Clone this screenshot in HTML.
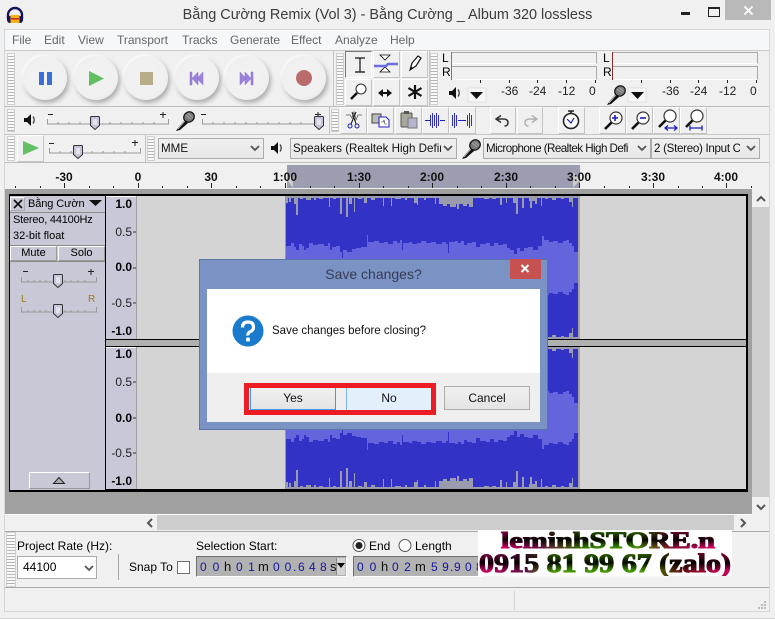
<!DOCTYPE html>
<html><head><meta charset="utf-8"><title>Audacity</title>
<style>
html,body{margin:0;padding:0}
body{width:775px;height:619px;overflow:hidden;position:relative;background:#f0f0f0;font-family:"Liberation Sans","Noto Sans CJK SC",sans-serif;font-size:12px;color:#000}
.a,.t{position:absolute}
.t{white-space:nowrap;line-height:14px}
.m{color:#666;font-size:12px;top:33px}
.grip{position:absolute;width:8px;background:repeating-linear-gradient(#fafafa 0,#fafafa 2px,#b4b4b4 2px,#b4b4b4 3px);border:1px solid #cfcfcf;box-sizing:border-box}
.tb{position:absolute;top:56px;width:44px;height:44px;border-radius:50%;background:radial-gradient(circle at 45% 45%,#f2f2f2 0,#f0f0f0 62%,#e4e4e4 100%);box-shadow:2px 3px 5px #acacac,-1px -1px 2px #fff}
.cell{position:absolute;background:#f0f0f0;border:1px solid;border-color:#fff #c4c4c4 #c4c4c4 #fff;box-sizing:border-box}
.combo{position:absolute;top:138px;height:21px;border:1px solid #acacac;background:linear-gradient(#f0f0f0,#e8e8e8);box-sizing:border-box;font-size:11.6px;line-height:19px;padding-left:2px;white-space:nowrap;overflow:hidden;color:#111}
.combo span{display:block;overflow:hidden}
.rb{font-size:12px;font-weight:bold;color:#111;top:170px;transform:translateX(-50%);z-index:2}
.vr{font-size:12px;color:#222;text-align:right;width:26px;left:106px}
.vb{font-weight:bold;color:#000}
.num{color:#16169e;letter-spacing:5.4px;font-size:12px;top:560px}
.numk{color:#111;font-size:13px;top:560px}
.dbtn{position:absolute;top:388px;height:22px;box-sizing:border-box;text-align:center;font-size:12px;line-height:20px;color:#111}
</style></head>
<body>
<!-- client frame -->
<div class="a" style="left:4px;top:29px;width:766px;height:583px;border:1px solid #d6d6d6;box-sizing:border-box;background:#f0f0f0"></div>
<div class="a" style="left:0;top:618px;width:775px;height:1px;background:#d4d4d4"></div>

<!-- title bar -->
<div class="t" style="left:0;width:775px;text-align:center;top:6px;font-size:14.45px;line-height:18px;color:#3c3c3c">Bằng Cường Remix (Vol 3) - Bằng Cường _ Album 320 lossless</div>
<svg class="a" style="left:5px;top:6px" width="20" height="18" viewBox="0 0 20 18"><path d="M3 13V9a7 7 0 0 1 14 0v4" fill="none" stroke="#14145a" stroke-width="2.4"/><rect x="2" y="10" width="16" height="7" rx="3" fill="#14145a"/><rect x="5.500" y="9" width="9" height="8" fill="#f6b21a"/><rect x="6" y="12" width="8" height="1.600" fill="#d8281c"/></svg>
<div class="a" style="left:681px;top:12px;width:9px;height:3px;background:#222"></div>
<div class="a" style="left:708px;top:7px;width:10px;height:7px;border:1px solid #222;border-top-width:2px"></div>
<div class="a" style="left:725px;top:0;width:46px;height:20px;background:#b9b9b9"></div>
<svg class="a" style="left:743px;top:5px" width="11" height="11"><path d="M1.500 1.500l8 8M9.500 1.500l-8 8" stroke="#fff" stroke-width="1.800"/></svg>

<!-- menu -->
<div class="a" style="left:5px;top:30px;width:764px;height:20px;background:#f6f7f8"></div>
<span class="t m" style="left:12px">File</span><span class="t m" style="left:44px">Edit</span><span class="t m" style="left:78px">View</span><span class="t m" style="left:117px">Transport</span><span class="t m" style="left:182px">Tracks</span><span class="t m" style="left:230px">Generate</span><span class="t m" style="left:291px">Effect</span><span class="t m" style="left:335px">Analyze</span><span class="t m" style="left:390px">Help</span>

<!-- toolbar separators -->
<div class="a" style="left:5px;top:50px;width:764px;height:1px;background:#c8c8c8"></div>
<div class="a" style="left:5px;top:106px;width:764px;height:1px;background:#bdbdbd"></div>
<div class="a" style="left:5px;top:134px;width:764px;height:1px;background:#c8c8c8"></div>
<div class="a" style="left:5px;top:162px;width:764px;height:1px;background:#bdbdbd"></div>
<div class="a" style="left:333px;top:51px;width:1px;height:55px;background:#c4c4c4"></div>
<div class="a" style="left:429px;top:51px;width:1px;height:55px;background:#c4c4c4"></div>
<div class="a" style="left:329px;top:107px;width:1px;height:27px;background:#c4c4c4"></div>
<div class="a" style="left:145px;top:135px;width:1px;height:27px;background:#c4c4c4"></div>

<div class="grip" style="left:7px;top:53px;height:52px"></div>
<div class="grip" style="left:336px;top:53px;height:52px"></div>
<div class="grip" style="left:430px;top:53px;height:52px"></div>
<div class="grip" style="left:7px;top:109px;height:23px"></div>
<div class="grip" style="left:331px;top:109px;height:23px"></div>
<div class="grip" style="left:7px;top:136px;height:25px"></div>
<div class="grip" style="left:147px;top:136px;height:25px"></div>

<!-- transport -->
<div class="tb" style="left:23px"></div><div class="tb" style="left:74px"></div><div class="tb" style="left:124px"></div><div class="tb" style="left:175px"></div><div class="tb" style="left:225px"></div><div class="tb" style="left:282px"></div>

<!-- tool cells -->
<div class="cell" style="left:345px;top:51px;width:27px;height:27px;border-color:#777 #fff #fff #777"></div>
<div class="cell" style="left:373px;top:51px;width:27px;height:27px"></div>
<div class="cell" style="left:401px;top:51px;width:27px;height:27px"></div>
<div class="cell" style="left:345px;top:79px;width:27px;height:27px"></div>
<div class="cell" style="left:373px;top:79px;width:27px;height:27px"></div>
<div class="cell" style="left:401px;top:79px;width:27px;height:27px"></div>

<!-- edit cells -->
<div class="cell" style="left:340px;top:107px;width:27px;height:27px"></div>
<div class="cell" style="left:367px;top:107px;width:27px;height:27px"></div>
<div class="cell" style="left:395px;top:107px;width:27px;height:27px"></div>
<div class="cell" style="left:422px;top:107px;width:27px;height:27px"></div>
<div class="cell" style="left:449px;top:107px;width:27px;height:27px"></div>
<div class="cell" style="left:490px;top:107px;width:26px;height:27px"></div>
<div class="cell" style="left:517px;top:107px;width:26px;height:27px"></div>
<div class="cell" style="left:558px;top:107px;width:27px;height:27px"></div>
<div class="cell" style="left:599px;top:107px;width:27px;height:27px"></div>
<div class="cell" style="left:626px;top:107px;width:27px;height:27px"></div>
<div class="cell" style="left:653px;top:107px;width:27px;height:27px"></div>
<div class="cell" style="left:680px;top:107px;width:27px;height:27px"></div>
<div class="cell" style="left:17px;top:135px;width:27px;height:27px"></div>

<!-- meters -->
<div class="a" style="left:451px;top:52px;width:146px;height:12px;background:#f0f0f0;border-bottom:1px solid #fff;border-top:1px solid #a8a8a8;border-right:1px solid #aaa;box-sizing:border-box"></div>
<div class="a" style="left:451px;top:66px;width:146px;height:14px;background:#f0f0f0;border-bottom:1px solid #fff;border-top:1px solid #a8a8a8;border-right:1px solid #aaa;box-sizing:border-box"></div>
<div class="a" style="left:612px;top:52px;width:146px;height:12px;background:#f0f0f0;border-bottom:1px solid #fff;border-top:1px solid #a8a8a8;border-right:1px solid #aaa;box-sizing:border-box"></div>
<div class="a" style="left:612px;top:66px;width:146px;height:14px;background:#f0f0f0;border-bottom:1px solid #fff;border-top:1px solid #a8a8a8;border-right:1px solid #aaa;box-sizing:border-box"></div>
<div class="a" style="left:451px;top:52px;width:1px;height:28px;background:#35a835"></div>
<div class="a" style="left:612px;top:52px;width:1px;height:28px;background:#8c2a2a"></div>
<span class="t" style="left:442px;top:51px">L</span><span class="t" style="left:442px;top:65px">R</span>
<span class="t" style="left:603px;top:51px">L</span><span class="t" style="left:603px;top:65px">R</span>
<span class="t" style="left:501px;top:84px;color:#222">-36</span><span class="t" style="left:529px;top:84px;color:#222">-24</span><span class="t" style="left:558px;top:84px;color:#222">-12</span><span class="t" style="left:589px;top:84px;color:#222">0</span>
<span class="t" style="left:662px;top:84px;color:#222">-36</span><span class="t" style="left:690px;top:84px;color:#222">-24</span><span class="t" style="left:719px;top:84px;color:#222">-12</span><span class="t" style="left:750px;top:84px;color:#222">0</span>

<!-- combos -->
<div class="combo" style="left:158px;width:106px"><span style="width:90px">MME</span></div>
<div class="combo" style="left:290px;width:167px"><span style="width:148px">Speakers (Realtek High Definit</span></div>
<div class="combo" style="left:483px;width:168px"><span style="width:146px;letter-spacing:-.55px">Microphone (Realtek High Defi</span></div>
<div class="combo" style="left:651px;width:109px"><span style="width:86px;letter-spacing:-.3px">2 (Stereo) Input C</span></div>

<!-- ruler -->
<div class="a" style="left:5px;top:163px;width:764px;height:26px;background:#f0f0f0"></div>
<div class="a" style="left:287px;top:165px;width:293px;height:23px;background:#9d9db2"></div>
<span class="t rb" style="left:64px">-30</span><span class="t rb" style="left:138px">0</span><span class="t rb" style="left:211px">30</span><span class="t rb" style="left:285px">1:00</span><span class="t rb" style="left:359px">1:30</span><span class="t rb" style="left:432px">2:00</span><span class="t rb" style="left:506px">2:30</span><span class="t rb" style="left:579px">3:00</span><span class="t rb" style="left:653px">3:30</span><span class="t rb" style="left:726px">4:00</span>

<!-- track area -->
<div class="a" style="left:5px;top:189px;width:747px;height:325px;background:#a0a0a0"></div>
<div class="a" style="left:5px;top:514px;width:747px;height:1px;background:#fff"></div>
<div class="a" style="left:752px;top:190px;width:17px;height:325px;background:#cdcdcd"></div>
<div class="a" style="left:752px;top:190px;width:17px;height:17px;background:#f0f0f0"></div>
<div class="a" style="left:752px;top:497px;width:17px;height:18px;background:#f0f0f0"></div>
<div class="a" style="left:157px;top:515px;width:577px;height:15px;background:#cdcdcd"></div>

<!-- track -->
<div class="a" style="left:9px;top:194px;width:739px;height:298px;background:#000"></div>
<div class="a" style="left:10px;top:196px;width:95px;height:294px;background:#c8c8d6"></div>
<div class="a" style="left:106px;top:196px;width:30px;height:143px;background:#c8c8d8;border-top:1px solid #fff;box-sizing:border-box"></div>
<div class="a" style="left:106px;top:347px;width:30px;height:142px;background:#c8c8d8;border-top:1px solid #fff;box-sizing:border-box"></div>
<div class="a" style="left:136px;top:196px;width:610px;height:143px;background:#d4d4d4"></div>
<div class="a" style="left:136px;top:347px;width:610px;height:142px;background:#d4d4d4"></div>
<div class="a" style="left:136px;top:196px;width:1px;height:143px;background:#a0a0a0"></div>
<div class="a" style="left:136px;top:347px;width:1px;height:142px;background:#a0a0a0"></div>
<div class="a" style="left:106px;top:340px;width:640px;height:6px;background:#b0b0b0"></div>

<!-- waveform -->
<svg class="a" style="left:0;top:0" width="775" height="619" viewBox="0 0 775 619">
<defs>
<g id="half">
<rect x="286" y="196" width="292" height="73" fill="#3232c6"/>
<path fill="#9b9bae" d="M286 196H578V198H286z"/>
<path fill="#9b9bae" d="M286 197h2V203H286zM289 197h2V202H289zM294 197h4V204H294zM296 197h2V215H296zM300 197h3V199H300zM306 197h5V200H306zM314 197h2V200H314zM319 197h4V199H319zM329 197h1V207H329zM333 197h3V199H333zM340 197h2V214H340zM346 197h2V217H346zM349 197h3V204H349zM354 197h1V212H354zM358 197h4V199H358zM364 197h3V203H364zM371 197h4V200H371zM383 197h1V206H383zM391 197h1V206H391zM395 197h6V199H395zM405 197h2V200H405zM414 197h3V203H414zM417 197h1V205H417zM424 197h2V200H424zM435 197h1V204H435zM439 197h34V204H439zM443 204h4V206H443zM450 204h6V207H450zM457 204h2V209H457zM463 204h4V206H463zM469 204h4V207H469zM484 197h5V199H484zM492 197h4V199H492zM500 197h2V205H500zM506 197h1V203H506zM513 197h4V203H513zM516 197h2V214H516zM522 197h2V208H522zM529 197h6V201H529zM530 197h2V208H530zM535 197h2V204H535zM541 197h1V206H541zM545 197h3V199H545zM552 197h4V200H552zM561 197h3V199H561zM569 197h4V202H569zM572 197h1V207H572z"/>
<path fill="#6464dc" d="M286 269V246H291V243H294V247H296V250H299V244H302V246H304V250H306V248H309V243H313V245H318V244H324V246H328V243H330V250H332V247H336V246H340V252H342V258H343V250H347V252H352V249H356V248H361V247H367V235H368V242H374V241H379V243H384V242H388V244H393V241H397V243H400V240H402V250H403V243H409V242H412V244H417V243H421V241H426V243H431V242H436V244H442V242H446V244H448V253H449V242H455V241H458V243H461V241H464V245H467V243H472V242H476V247H480V244H486V243H490V246H494V243H498V245H503V244H507V248H510V250H514V254H517V248H520V251H524V248H528V247H533V250H538V246H542V236H544V240H549V242H553V241H558V243H563V241H566V240H569V243H572V246H574V252H578V269z"/>
</g>
</defs>
<rect x="285" y="196" width="1" height="143" fill="#9a9a9a"/><rect x="285" y="347" width="1" height="142" fill="#9a9a9a"/>
<rect x="578" y="196" width="2" height="143" fill="#a4a4a4"/><rect x="578" y="347" width="2" height="142" fill="#a4a4a4"/>
<use href="#half"/>
<g transform="matrix(1 0 0 -1 0 535)"><use href="#half"/></g>
<g transform="translate(0,151)"><use href="#half"/></g>
<g transform="matrix(1 0 0 -1 0 685)"><use href="#half"/></g>
<rect x="106" y="339" width="640" height="1" fill="#000"/><rect x="106" y="346" width="640" height="1" fill="#000"/>
<rect x="105" y="196" width="1" height="294" fill="#000"/>

<!-- ruler ticks -->
<path fill="none" stroke="#222" stroke-width="1" d="M64.500 183V188M138.500 183V188M211.500 183V188M285.500 183V188M359.500 183V188M432.500 183V188M506.500 183V188M579.500 183V188M653.500 183V188M726.500 183V188M15.500 186V188M40.500 186V188M89.500 186V188M113.500 186V188M162.500 186V188M187.500 186V188M236.500 186V188M260.500 186V188M310.500 186V188M334.500 186V188M383.500 186V188M408.500 186V188M457.500 186V188M481.500 186V188M530.500 186V188M555.500 186V188M604.500 186V188M629.500 186V188M678.500 186V188M702.500 186V188M751.500 186V188"/>
<path d="M293 172V188L287 180z" fill="#cfcfcf" stroke="#aaa" stroke-width=".5"/><path d="M573 172V188L580 180z" fill="#cfcfcf" stroke="#aaa" stroke-width=".5"/>

<!-- transport icons -->
<rect x="39" y="72" width="5" height="13" fill="#3a6fd8"/><rect x="47" y="72" width="5" height="13" fill="#3a6fd8"/>
<path d="M89 71V86L104 78.500z" fill="#62c062"/>
<rect x="140" y="72" width="13" height="13" fill="#b9ac88"/>
<path d="M190 72h2v13h-2zM192 78.500l6-6.500v13zM197 78.500l6-6.500v13z" fill="#9c82dc" stroke="#8a70cc" stroke-width=".5"/>
<path d="M253 72h-2v13h2zM251 78.500l-6-6.500v13zM246 78.500l-6-6.500v13z" fill="#9c82dc" stroke="#8a70cc" stroke-width=".5"/>
<circle cx="304" cy="78" r="8" fill="#ba6c6c"/>
<!-- tool icons -->
<path d="M355 58h3.500M362 58h-3.500M360 58V72M355 72h10M355 58h10" stroke="#111" stroke-width="1.200" fill="none"/>
<path d="M380 55h10l-5 5zM385 67l5 5h-10z" fill="#fff" stroke="#111" stroke-width=".8"/>
<path d="M374 66h12l2-2h10" fill="none" stroke="#6c6ce0" stroke-width="2.500"/>
<path d="M410 70l2-7 6-7 3 2-5 8z" fill="#fff" stroke="#111" stroke-width="1.200"/><path d="M410 70l1-4 2 2z" fill="#111"/>
<circle cx="361" cy="89" r="5" fill="#fff" stroke="#333" stroke-width="1.100"/><path d="M357 93l-6 6" stroke="#111" stroke-width="2.500"/>
<path d="M379 93h12" stroke="#111" stroke-width="2"/><path d="M383 89l-5 4 5 4zM387 89l5 4-5 4z" fill="#111"/>
<path d="M415 85v14M408.500 88l13 8M421.500 88l-13 8" stroke="#111" stroke-width="2.200"/>
<!-- meter ticks -->
<path d="M480.500 80v3M509.500 80v3M537.500 80v3M566.500 80v3M595.500 80v3M641.500 80v3M670.500 80v3M698.500 80v3M727.500 80v3M756.500 80v3" stroke="#222"/>
<path d="M468 88h18v14h-18z" fill="#f6f6f6" stroke="#d0d0d0" stroke-width=".5"/><path d="M470 92h13l-6.500 7z" fill="#111"/>
<path d="M628 88h18v14h-18z" fill="#f6f6f6" stroke="#d0d0d0" stroke-width=".5"/><path d="M631 92h13l-6.500 7z" fill="#111"/>
<defs>
<g id="spk"><path d="M0 4h3l4-4v12l-4-4H0z" fill="#111"/><path d="M9 2.500q2.500 3.500 0 7" fill="none" stroke="#333" stroke-width="1.200"/></g>
<g id="mic"><path d="M1 21l2-3 7-8 3 3-8 7z" fill="#111"/><path d="M3 19l7-8" stroke="#ddd" stroke-width=".7"/><ellipse cx="14" cy="7" rx="5.500" ry="5" transform="rotate(-40 14 7)" fill="#777" stroke="#111" stroke-width="1.200"/><path d="M11 5l5 4M13 3.500l5 4" stroke="#bbb" stroke-width=".7"/></g>
<g id="thumb"><path d="M1.500.5h7q1 0 1 1v8l-4.500 4-4.500-4v-8q0-1 1-1z" fill="#c6c6da" stroke="#333"/><path d="M3 4h4M3 6h4M3 8h4" stroke="#fff"/></g>
<g id="mag"><circle cx="15" cy="9" r="6" fill="#fff" stroke="#333" stroke-width="1.200"/><path d="M10.500 13.500L4 20" stroke="#111" stroke-width="2.600"/></g>
</defs>
<use href="#spk" transform="translate(24,114)"/><use href="#spk" transform="translate(271,142)"/><use href="#spk" transform="translate(449,87)"/>
<use href="#mic" transform="translate(175,110)"/><use href="#mic" transform="translate(461,138)"/><use href="#mic" transform="translate(606,84)"/>
<path d="M48 114.500h5M201 114.500h5M49 143.500h5M23 271.500h5" stroke="#222"/><path d="M160 114.500h6M163 112v6M315 114.500h6M318 112v6M132 142.500h6M135 140v6M88 271.500h6M91 269v6" stroke="#222"/>
<!-- sliders -->
<path d="M47.500 119v5H168.500v-5M202.500 119v5H318.500v-5M49.500 148v5H140.500v-5M21.500 277v5H96.500v-5M21.500 307v5H96.500v-5" fill="none" stroke="#9a9a9a"/>
<path d="M58 122v2M69 122v2M80 122v2M110 122v2M121 122v2M132 122v2M143 122v2M154 122v2M213 122v2M224 122v2M235 122v2M246 122v2M257 122v2M268 122v2M279 122v2M290 122v2M301 122v2M60 151v2M71 151v2M92 151v2M103 151v2M114 151v2M125 151v2M28 280v2M34 280v2M40 280v2M46 280v2M65 280v2M71 280v2M78 280v2M85 280v2M28 310v2M34 310v2M40 310v2M46 310v2M65 310v2M71 310v2M78 310v2M85 310v2" stroke="#9a9a9a"/>
<use href="#thumb" transform="translate(90,116)"/><use href="#thumb" transform="translate(314,116)"/><use href="#thumb" transform="translate(73,145)"/><use href="#thumb" transform="translate(53,274)"/><use href="#thumb" transform="translate(53,304)"/>
<!-- edit icons -->
<path d="M346 115h4l2 3 2-6 2 8 2-5h4" fill="none" stroke="#555" stroke-width=".8"/><path d="M356 112l-5 12M352 112l4 12" stroke="#111"/><circle cx="350" cy="126" r="2" fill="none" stroke="#1c1ca8"/><circle cx="357" cy="126" r="2" fill="none" stroke="#1c1ca8"/>
<rect x="372" y="114" width="9" height="9" fill="#bbb" stroke="#444"/><path d="M379 117h7l3 3v7h-10z" fill="#fff" stroke="#1c1cc8"/><path d="M381 122h2l1-2 1 4h2" fill="none" stroke="#333" stroke-width=".6"/>
<rect x="401" y="113" width="11" height="14" rx="1" fill="#a8a89a" stroke="#555"/><rect x="404" y="111" width="5" height="3" fill="#555"/><rect x="408" y="118" width="9" height="10" fill="#b4b4cc" stroke="#777"/>
<path d="M425 120.500h5M440 120.500h5M430.500 115v11M432.500 113v15M434.500 115v11M436.500 113v15M438.500 115v11" fill="none" stroke="#1c1cc0" stroke-width=".9"/>
<path d="M452.500 115v11M454.500 113v15M456.500 115v11M458 120.500h8M467.500 115v11M469.500 113v15M471.500 115v11" fill="none" stroke="#1c1cc0" stroke-width=".9"/>
<path d="M501 115.500l-5 3.500 5 3.500M496 119h7q5 0 5 3.500t-3.500 3.500" fill="none" stroke="#333" stroke-width="1.500"/>
<path d="M532 115.500l5 3.500-5 3.500M537 119h-7q-5 0-5 3.500t3.500 3.500" fill="none" stroke="#b0b0b0" stroke-width="1.500"/>
<circle cx="571" cy="121" r="7.500" fill="#fff" stroke="#222" stroke-width="1.600"/><path d="M568 111h6M571 111v3" stroke="#222" stroke-width="1.600"/><path d="M567 119l4 4 3-5" fill="none" stroke="#1c1cb0" stroke-width="1.200"/>
<use href="#mag" transform="translate(601,109)"/><path d="M612 118h6M615 115v6" stroke="#1c1cc0" stroke-width="1.600"/>
<use href="#mag" transform="translate(628,109)"/><path d="M640 118h6" stroke="#1c1cc0" stroke-width="1.600"/>
<use href="#mag" transform="translate(655,107)"/><path d="M665 128h12M668 125.500l-3 2.500 3 2.500M674 125.500l3 2.500-3 2.500" fill="none" stroke="#1c1cc0" stroke-width="1.300"/>
<use href="#mag" transform="translate(682,107)"/><path d="M690 125.500v5M702 125.500v5M690 128h12" fill="none" stroke="#1c1cc0" stroke-width="1.300"/>
<path d="M23 141V155L39 148z" fill="#62c062"/>
<!-- combo chevrons -->
<path d="M251 146l4 4 4-4M444 146l4 4 4-4M638 146l4 4 4-4M747 146l4 4 4-4" fill="none" stroke="#555" stroke-width="1.800"/>
<!-- scroll arrows -->
<path d="M757 201l4-4 4 4M757 505l4 4 4-4M152 519l-4 4 4 4M741 519l4 4-4 4" fill="none" stroke="#555" stroke-width="2"/>
<!-- track panel icons -->
<path d="M10 212.500H105M10 245.500H105M10 261.500H105" stroke="#8a8a8a" fill="none"/>
<path d="M14 200l8 8M22 200l-8 8" stroke="#111" stroke-width="1.600"/>
<path d="M89 200h13l-6.500 6z" fill="#111"/>
</svg>

<!-- track panel -->
<div class="a" style="left:10px;top:197px;width:15px;height:14px;border:1px solid;border-color:#fff #aaa #aaa #fff;box-sizing:border-box"></div>
<span class="t" style="left:28px;top:197px;font-size:11px;letter-spacing:-.1px">Bằng Cườn</span>
<span class="t" style="left:13px;top:213px;font-size:11px;letter-spacing:-.2px">Stereo, 44100Hz</span>
<span class="t" style="left:13px;top:229px;font-size:11px">32-bit float</span>
<div class="a" style="left:10px;top:246px;width:47px;height:15px;border:1px solid;border-color:#fff #999 #999 #fff;box-sizing:border-box;text-align:center;font-size:11px;line-height:13px">Mute</div>
<div class="a" style="left:58px;top:246px;width:47px;height:15px;border:1px solid;border-color:#fff #999 #999 #fff;box-sizing:border-box;text-align:center;font-size:11px;line-height:13px">Solo</div>
<span class="t" style="left:21px;top:293px;font-size:10px;color:#a07818">L</span><span class="t" style="left:88px;top:293px;font-size:10px;color:#a07818">R</span>
<div class="a" style="left:29px;top:472px;width:61px;height:17px;border:1px solid;border-color:#fff #999 #999 #fff;box-sizing:border-box"></div>
<svg class="a" style="left:52px;top:476px" width="14" height="9"><path d="M1.500 7.500l5.500-6 5.500 6z" fill="#aaa" stroke="#222"/></svg>

<!-- vertical ruler -->
<span class="t vr vb" style="top:197px">1.0</span><span class="t vr" style="top:225px">0.5</span><span class="t vr vb" style="top:260px">0.0</span><span class="t vr" style="top:296px;">-0.5</span><span class="t vr vb" style="top:324px">-1.0</span>
<span class="t vr vb" style="top:347px">1.0</span><span class="t vr" style="top:375px">0.5</span><span class="t vr vb" style="top:411px">0.0</span><span class="t vr" style="top:446px">-0.5</span><span class="t vr vb" style="top:474px">-1.0</span>
<svg class="a" style="left:130px;top:196px" width="7" height="294"><path d="M3 36h3M3 72h3M3 107h3M3 186h3M3 222h3M3 257h3" stroke="#333"/></svg>

<!-- bottom toolbar -->
<div class="a" style="left:5px;top:515px;width:136px;height:16px;background:#f0f0f0"></div>
<div class="a" style="left:5px;top:531px;width:764px;height:1px;background:#a8a8a8"></div>
<div class="a" style="left:5px;top:587px;width:764px;height:1px;background:#a8a8a8"></div>
<div class="grip" style="left:6px;top:532px;width:10px;height:55px"></div>
<span class="t" style="left:17px;top:539px">Project Rate (Hz):</span>
<div class="a" style="left:17px;top:556px;width:80px;height:23px;background:#fff;border:1px solid #acacac;box-sizing:border-box;line-height:20px;padding-left:5px;font-size:12px">44100</div>
<svg class="a" style="left:83px;top:564px" width="12" height="9"><path d="M2 2l4 4 4-4" fill="none" stroke="#555" stroke-width="1.800"/></svg>
<div class="a" style="left:118px;top:554px;width:1px;height:26px;background:#a8a8a8"></div>
<span class="t" style="left:129px;top:560px">Snap To</span>
<div class="a" style="left:177px;top:561px;width:13px;height:13px;background:#fff;border:1px solid #707070;box-sizing:border-box"></div>
<span class="t" style="left:196px;top:539px">Selection Start:</span>
<div class="a" style="left:196px;top:556px;width:151px;height:21px;background:#b2b2b2;border:1px solid;border-color:#707070 #fff #fff #707070;box-sizing:border-box"></div>
<span class="t num" style="left:200px;letter-spacing:6px">00</span><span class="t numk" style="left:224px">h</span><span class="t num" style="left:236px;letter-spacing:5.5px">01</span><span class="t numk" style="left:258px">m</span><span class="t num" style="left:273px;letter-spacing:5px">00</span><span class="t num" style="left:293px">.</span><span class="t num" style="left:298px;letter-spacing:4.3px">648</span><span class="t numk" style="left:330px">s</span>
<div class="a" style="left:336px;top:558px;width:9px;height:17px;background:#d4d4d4;border-left:1px solid #888;box-sizing:border-box"></div>
<svg class="a" style="left:337px;top:563px" width="8" height="6"><path d="M0 0h8l-4 5z" fill="#000"/></svg>
<div class="a" style="left:353px;top:556px;width:130px;height:21px;background:#b2b2b2;border:1px solid;border-color:#707070 #fff #fff #707070;box-sizing:border-box"></div>
<span class="t num" style="left:357px;letter-spacing:6px">00</span><span class="t numk" style="left:381px">h</span><span class="t num" style="left:392px;letter-spacing:5.5px">02</span><span class="t numk" style="left:415px">m</span><span class="t num" style="left:431px;letter-spacing:4.5px">59</span><span class="t num" style="left:450px">.</span><span class="t num" style="left:454px;letter-spacing:4.3px">908</span>
<svg class="a" style="left:352px;top:538px" width="60" height="15"><circle cx="7" cy="7.500" r="6" fill="#fff" stroke="#555"/><circle cx="7" cy="7.500" r="3.500" fill="#222"/><circle cx="53" cy="7.500" r="6" fill="#fbfbfb" stroke="#555"/></svg>
<span class="t" style="left:369px;top:539px">End</span><span class="t" style="left:415px;top:539px">Length</span>
<div class="a" style="left:514px;top:591px;width:1px;height:19px;background:#d4d4d4"></div>
<svg class="a" style="left:757px;top:600px" width="10" height="10"><path d="M7 1h2v2H7zM4 4h2v2H4zM7 4h2v2H7zM1 7h2v2H1zM4 7h2v2H4zM7 7h2v2H7z" fill="#bdbdbd"/></svg>

<!-- logo -->
<div class="a" style="left:503px;top:576px;width:165px;height:2px;background:#f6f6f6"></div>
<svg class="a" style="left:478px;top:530px;isolation:isolate" width="254" height="46" viewBox="0 0 254 46">
<defs>
<linearGradient id="h1" x1="0" x2="1" y1="0" y2="0"><stop offset=".09" stop-color="#e8006e"/><stop offset=".22" stop-color="#7a0a48"/><stop offset=".42" stop-color="#348000"/><stop offset=".62" stop-color="#48a000"/><stop offset=".76" stop-color="#901030"/><stop offset=".93" stop-color="#e8006e"/></linearGradient>
<linearGradient id="h2" x1="0" x2="1" y1="0" y2="0"><stop offset="0" stop-color="#e8006e"/><stop offset=".18" stop-color="#6a1048"/><stop offset=".3" stop-color="#48a000"/><stop offset=".65" stop-color="#48a000"/><stop offset=".8" stop-color="#6a1010"/><stop offset="1" stop-color="#e8006e"/></linearGradient>
<linearGradient id="v1" x1="0" x2="0" y1="0" y2="1"><stop offset="0" stop-color="#000" stop-opacity=".3"/><stop offset=".45" stop-color="#000" stop-opacity=".95"/><stop offset=".8" stop-color="#000" stop-opacity=".05"/><stop offset="1" stop-color="#000" stop-opacity=".2"/></linearGradient>
</defs>
<rect width="254" height="46" fill="#fff"/>
<g font-family="'Liberation Serif',serif" font-weight="bold" fill="#000" stroke="#000" stroke-width="1.100">
<text x="23" y="18" font-size="23" textLength="214" lengthAdjust="spacingAndGlyphs">leminhSTORE.n</text>
<text x="1" y="42" font-size="26" textLength="252" lengthAdjust="spacingAndGlyphs">0915 81 99 67 (zalo)</text>
</g>
<g style="mix-blend-mode:screen">
<rect width="254" height="22" fill="url(#h1)"/><rect width="254" height="22" fill="url(#v1)"/>
<rect y="22" width="254" height="24" fill="url(#h2)"/><rect y="22" width="254" height="24" fill="url(#v1)"/>
</g>
</svg>

<!-- dialog -->
<div class="a" style="left:199px;top:259px;width:349px;height:171px;background:#7b92c4;border:1px solid #5f74a6;box-sizing:border-box"></div>
<span class="t" style="left:199px;width:349px;text-align:center;top:265px;font-size:14px;line-height:18px;color:#353c55">Save changes?</span>
<div class="a" style="left:510px;top:259px;width:31px;height:20px;background:#c75050"></div>
<svg class="a" style="left:520px;top:264px" width="11" height="10"><path d="M1.500 1l7 7M8.500 1l-7 7" stroke="#fff" stroke-width="2"/></svg>
<div class="a" style="left:207px;top:289px;width:333px;height:84px;background:#fff"></div>
<div class="a" style="left:207px;top:373px;width:333px;height:49px;background:#efefef"></div>
<svg class="a" style="left:232px;top:315px" width="32" height="32"><circle cx="16" cy="16" r="15.500" fill="#1a7acb"/><path d="M10.500 12.500q0-5.500 5.500-5.500t5.500 5q0 3-3 4.500t-2.500 4" fill="none" stroke="#fff" stroke-width="3.200"/><rect x="14" y="22.500" width="4" height="4" rx="1.500" fill="#fff"/></svg>
<span class="t" style="left:272px;top:324px;font-size:11.500px;color:#111">Save changes before closing?</span>
<div class="dbtn" style="left:250px;width:86px;background:linear-gradient(#f0f0f0,#e4e4e4);border-left:1px solid #3c9ce8;border-bottom:1px solid #3c9ce8;border-right:1px solid #3c9ce8">Yes</div>
<div class="dbtn" style="left:346px;width:85px;background:#e3effa;border-left:1px solid #7fb6e8">No</div>
<div class="dbtn" style="left:444px;width:86px;background:linear-gradient(#f0f0f0,#e4e4e4);border:1px solid #acacac;top:386px;height:24px;line-height:22px">Cancel</div>
<div class="a" style="left:244px;top:383px;width:192px;height:32px;border:5px solid #ed1c24;box-sizing:border-box"></div>
</body></html>
